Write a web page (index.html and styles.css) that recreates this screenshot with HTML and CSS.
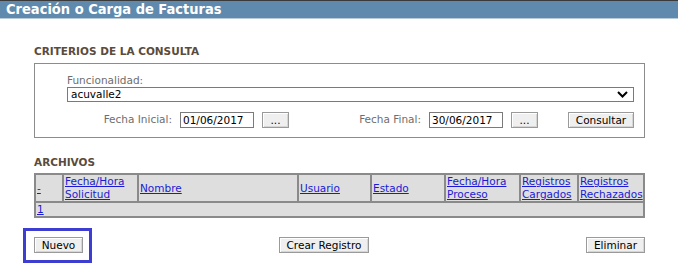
FILE: index.html
```html
<!DOCTYPE html>
<html lang="es">
<head>
  <meta charset="UTF-8">
  <title>Creación o Carga de Facturas</title>
  <link rel="stylesheet" href="styles.css">
</head>
<body>
  <div class="titlebar">Creación o Carga de Facturas</div>

  <div class="content">
    <h2 class="section">CRITERIOS DE LA CONSULTA</h2>
    <div class="criteria">
      <label class="label" for="func">Funcionalidad:</label>
      <div class="select-box" id="func">
        <span>acuvalle2</span>
        <svg class="chevron" width="11" height="7" viewBox="0 0 11 7"><path d="M1 1 L5.5 5.5 L10 1" fill="none" stroke="#000" stroke-width="2"/></svg>
      </div>
      <div class="dates">
        <span class="label date-label first">Fecha Inicial:</span>
        <input class="date" type="text" value="01/06/2017">
        <button class="btn pick">...</button>
        <span class="label date-label second">Fecha Final:</span>
        <input class="date" type="text" value="30/06/2017">
        <button class="btn pick">...</button>
        <button class="btn consult">Consultar</button>
      </div>
    </div>

    <h2 class="section archives">ARCHIVOS</h2>
    <table class="files">
      <tr>
        <th class="c1"><a href="#">-</a></th>
        <th class="c2"><a href="#">Fecha/Hora Solicitud</a></th>
        <th class="c3"><a href="#">Nombre</a></th>
        <th class="c4"><a href="#">Usuario</a></th>
        <th class="c5"><a href="#">Estado</a></th>
        <th class="c6"><a href="#">Fecha/Hora Proceso</a></th>
        <th class="c7"><a href="#">Registros Cargados</a></th>
        <th class="c8"><a href="#">Registros Rechazados</a></th>
      </tr>
      <tr>
        <td colspan="8"><a href="#">1</a></td>
      </tr>
    </table>

    <div class="actions">
      <div class="highlight"><button class="btn">Nuevo</button></div>
      <button class="btn create">Crear Registro</button>
      <button class="btn delete">Eliminar</button>
    </div>
  </div>
</body>
</html>
```

FILE: styles.css
```css
body {
  margin: 0;
  font-family: "DejaVu Sans", Verdana, sans-serif;
  font-size: 10.5px;
  background: #ffffff;
  color: #000000;
}

.titlebar {
  border-top: 1px solid #3a3a3a;
  border-bottom: 1px solid #b8cbdb;
  background: #5f8aae;
  color: #ffffff;
  font-family: "DejaVu Sans Condensed", "DejaVu Sans", sans-serif;
  font-weight: bold;
  font-size: 14.5px;
  height: 17px;
  line-height: 16px;
  padding-left: 6px;
}

.content {
  width: 611px;
  margin-left: 34px;
}

.section {
  margin: 26px 0 5px;
  font-size: 10.5px;
  line-height: 13px;
  font-weight: bold;
  color: #5a4b3c;
}

.section.archives {
  margin: 18px 0 4px;
}

.criteria {
  border: 1px solid #8c8c8c;
  padding: 10px 10px 9px 32px;
}

.label {
  display: block;
  color: #6e6e6e;
  line-height: 13px;
}

.select-box {
  height: 13px;
  border: 1px solid #7a7a7a;
  display: flex;
  align-items: center;
  justify-content: space-between;
  padding: 0 5px 0 3px;
  line-height: 13px;
}

.chevron {
  display: block;
}

.dates {
  display: flex;
  align-items: center;
  margin-top: 9px;
  height: 17px;
}

.date-label {
  text-align: right;
  margin-right: 8px;
}

.date-label.first {
  width: 105px;
}

.date-label.second {
  width: 132px;
}

.date {
  width: 74px;
  height: 16px;
  box-sizing: border-box;
  border: 1px solid #7a7a7a;
  padding: 0 2px;
  margin: 0 8px 0 0;
  font-family: inherit;
  font-size: 10.5px;
}

.btn {
  height: 16px;
  box-sizing: border-box;
  padding: 0 6px;
  font-family: inherit;
  font-size: 10.5px;
  color: #000000;
  background: #efefef;
  border: 1px solid #9a9a9a;
  box-shadow: inset 1px 1px #ffffff, inset -1px -1px #d6d6d6;
  line-height: 12px;
}

.btn.pick {
  width: 27px;
  padding: 0;
}

.btn.consult {
  margin-left: auto;
  width: 66px;
  padding: 0;
}

.files {
  width: 609px;
  table-layout: fixed;
  border-collapse: collapse;
  border: 2px solid #7d7d7d;
  background: #dedede;
}

.files th,
.files td {
  border: 2px solid #8a8a8a;
  padding: 0 1px;
  text-align: left;
  vertical-align: middle;
  font-weight: normal;
  line-height: 13px;
  white-space: normal;
}

.files th {
  height: 25px;
}

.files td {
  height: 13px;
}

.files a {
  color: #1a1ad6;
}

.c1 { width: 24px; }
.c2 { width: 71px; }
.c3 { width: 156px; }
.c4 { width: 69px; }
.c5 { width: 70px; }
.c6 { width: 71px; }
.c7 { width: 54px; }
.c8 { width: 62px; }

.actions {
  display: flex;
  align-items: flex-start;
  margin-top: 10px;
}

.highlight {
  margin-left: -11px;
  border: 3px solid #3d3dd2;
  padding: 6px 6px 7px 8px;
}

.highlight .btn {
  display: block;
  width: 49px;
}

.btn.create {
  margin-left: 187px;
  margin-top: 9px;
  width: 90px;
  padding: 0;
}

.btn.delete {
  margin-left: auto;
  margin-top: 9px;
  width: 59px;
  padding: 0;
}
```
